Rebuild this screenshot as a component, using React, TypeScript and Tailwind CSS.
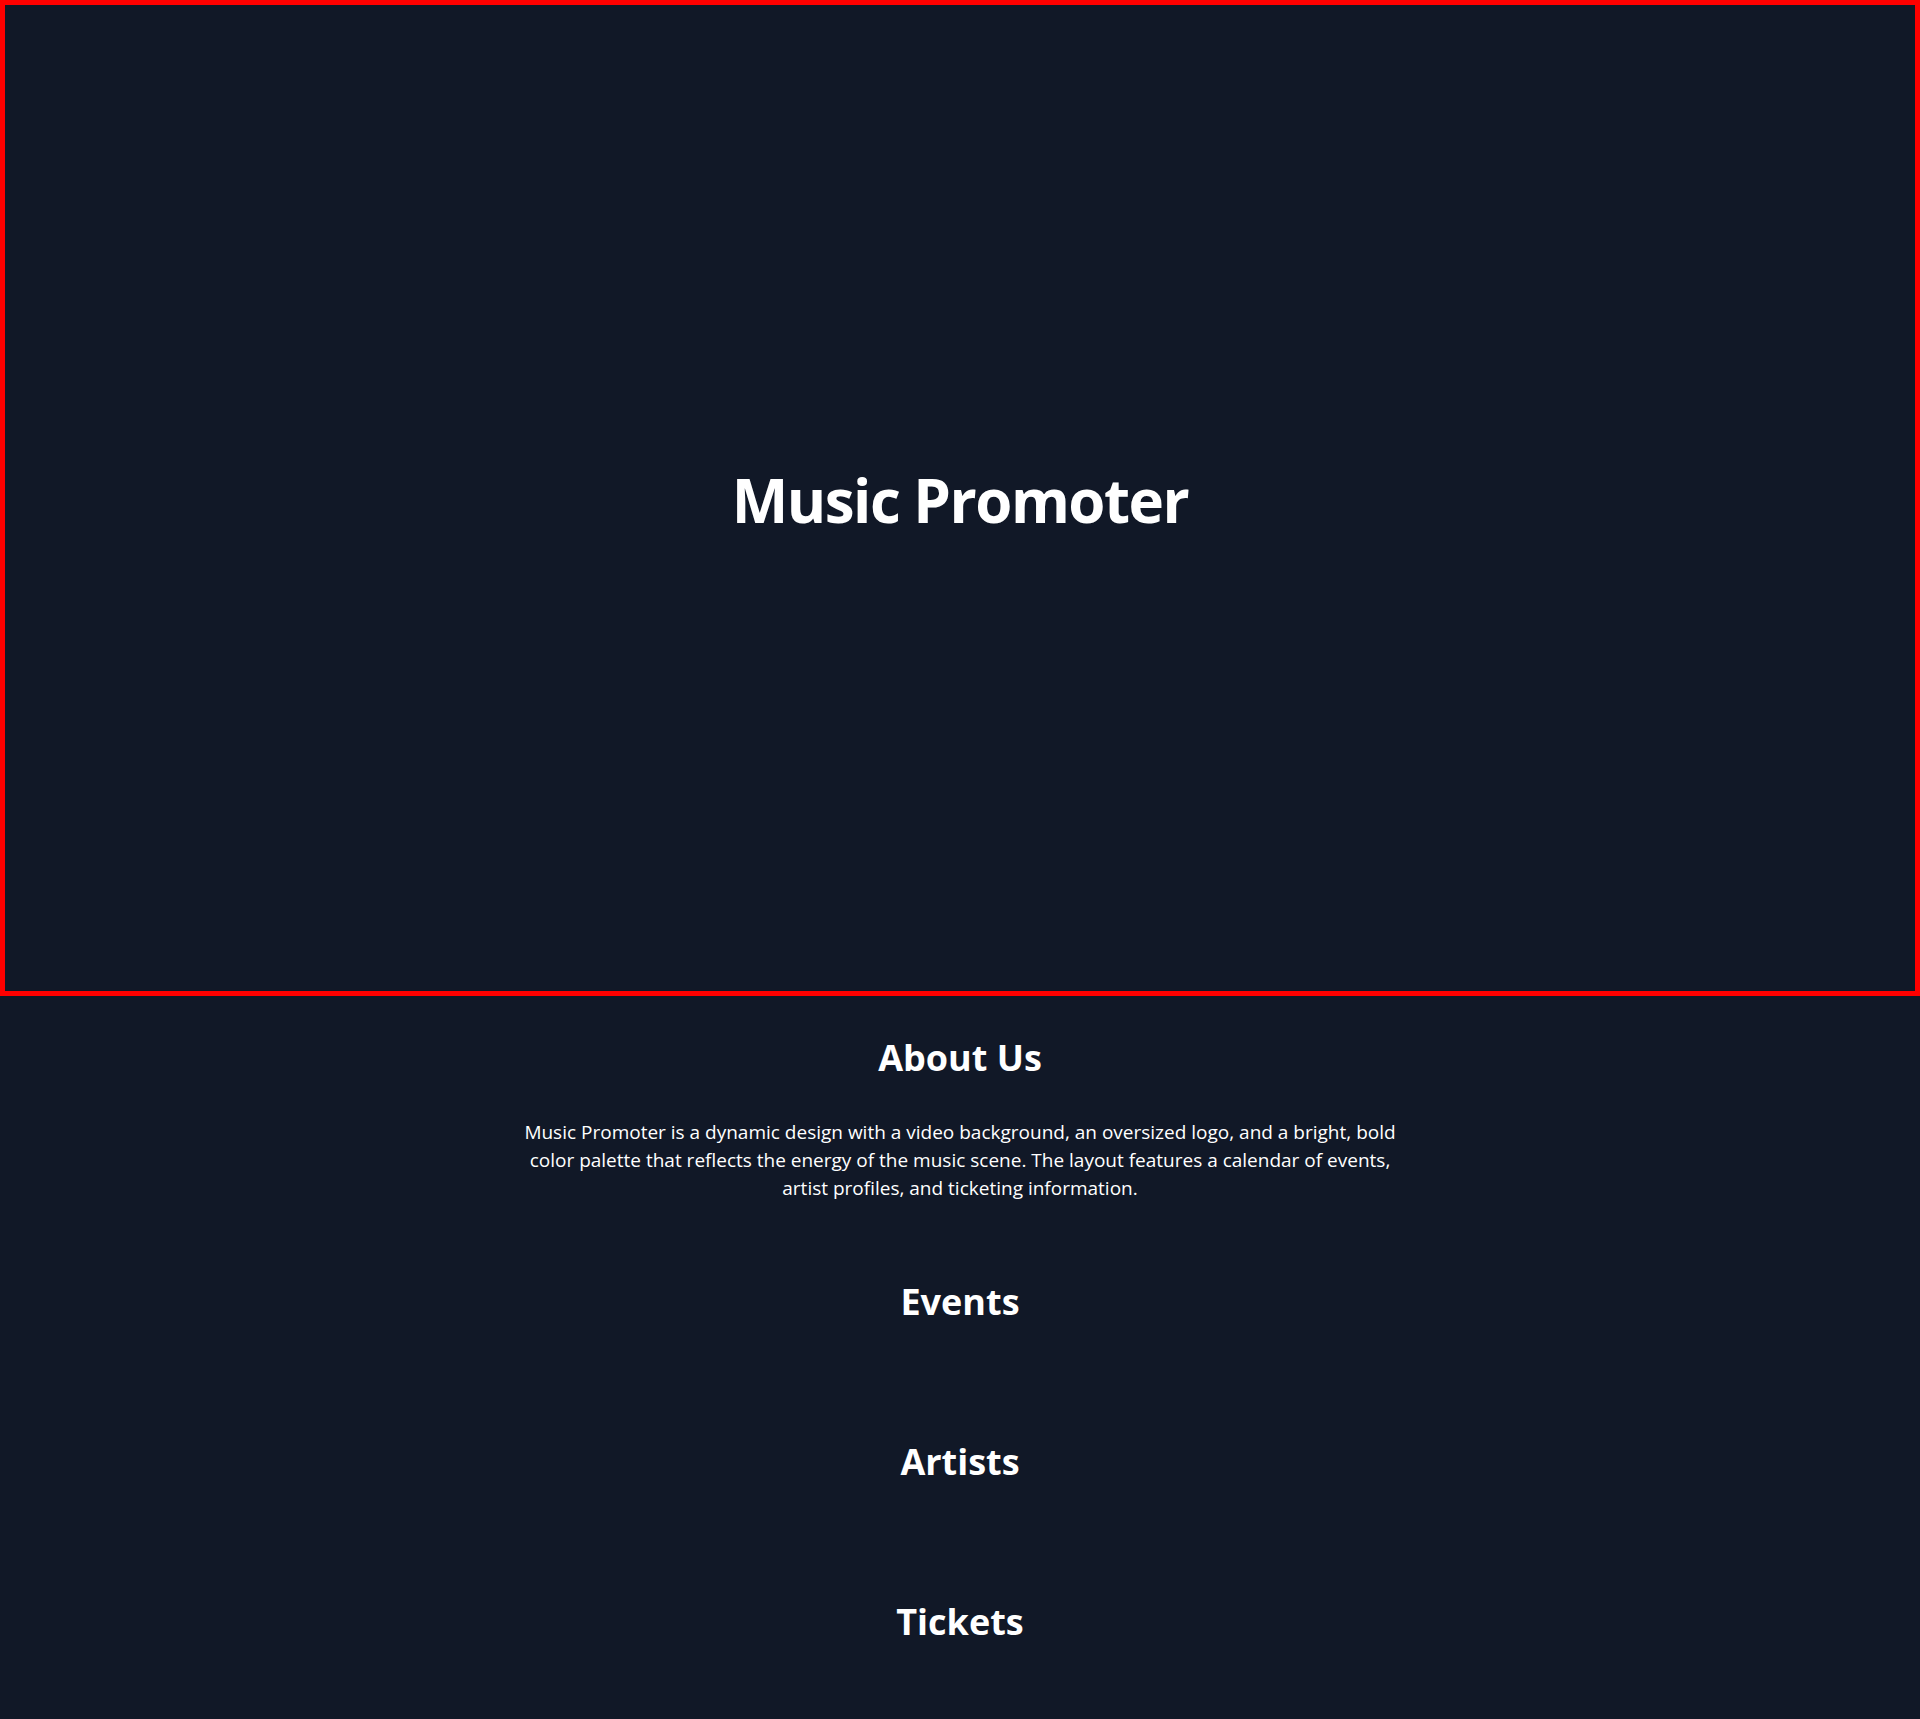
import React from "react";

const sections = ["Events", "Artists", "Tickets"];

export default function App() {
  return (
    <div className="min-h-screen bg-[#111827] text-white font-['Segoe_UI','Open_Sans',sans-serif]">
      {/* Hero (video background placeholder) */}
      <header className="h-[996px] border-[5px] border-[#ff0000] flex items-center justify-center pt-1">
        <h1 className="text-6xl font-bold tracking-tight">Music Promoter</h1>
      </header>

      <section className="pt-[42px] pb-10 text-center">
        <h2 className="text-4xl font-bold mb-10">About Us</h2>
        <p className="max-w-[900px] mx-auto text-[19px] leading-7">
          Music Promoter is a dynamic design with a video background, an oversized logo, and a bright, bold color
          palette that reflects the energy of the music scene. The layout features a calendar of events, artist
          profiles, and ticketing information.
        </p>
      </section>

      {sections.map((name) => (
        <section key={name} className="py-10 text-center">
          <h2 className="text-4xl font-bold mb-10">{name}</h2>
        </section>
      ))}
    </div>
  );
}
